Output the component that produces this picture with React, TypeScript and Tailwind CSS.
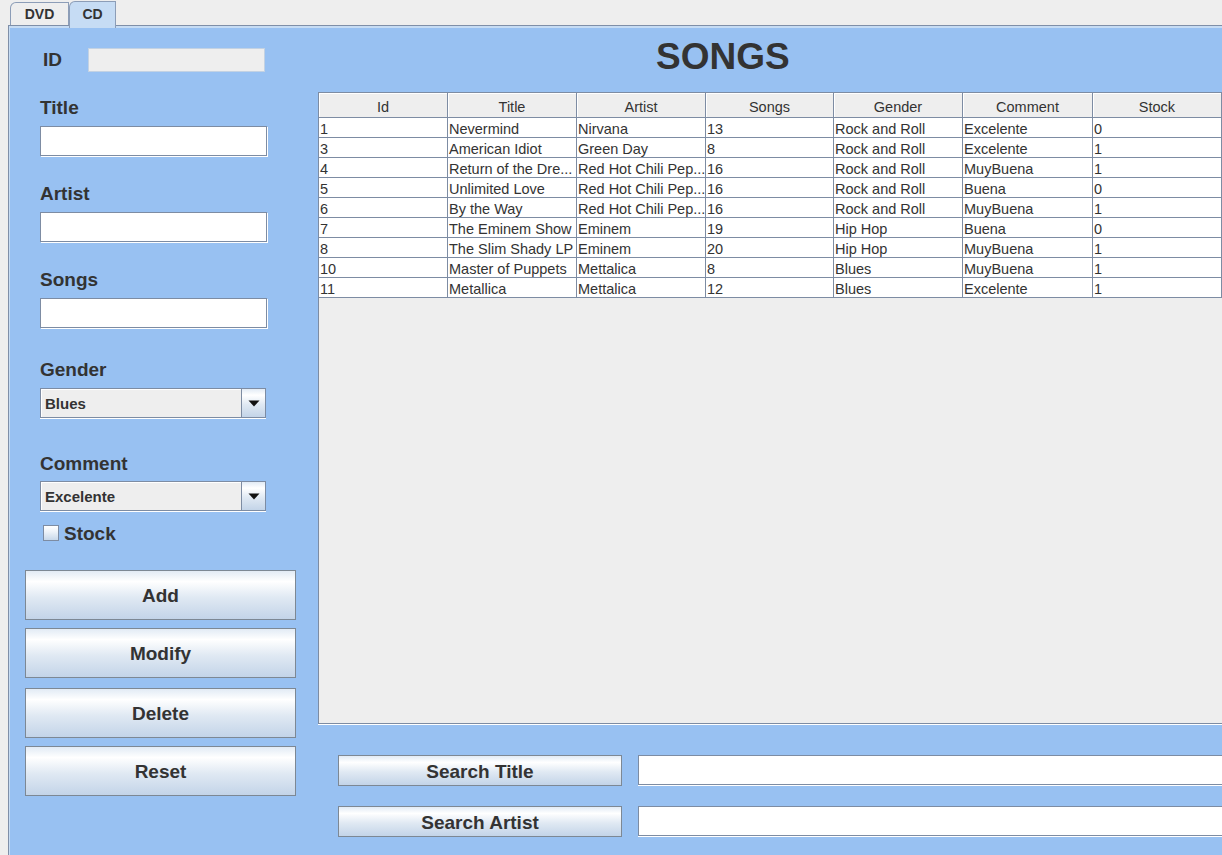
import React from "react";

const rows: string[][] = [
  ["1", "Nevermind", "Nirvana", "13", "Rock and Roll", "Excelente", "0"],
  ["3", "American Idiot", "Green Day", "8", "Rock and Roll", "Excelente", "1"],
  ["4", "Return of the Dre...", "Red Hot Chili Pep...", "16", "Rock and Roll", "MuyBuena", "1"],
  ["5", "Unlimited Love", "Red Hot Chili Pep...", "16", "Rock and Roll", "Buena", "0"],
  ["6", "By the Way", "Red Hot Chili Pep...", "16", "Rock and Roll", "MuyBuena", "1"],
  ["7", "The Eminem Show", "Eminem", "19", "Hip Hop", "Buena", "0"],
  ["8", "The Slim Shady LP", "Eminem", "20", "Hip Hop", "MuyBuena", "1"],
  ["10", "Master of Puppets", "Mettalica", "8", "Blues", "MuyBuena", "1"],
  ["11", "Metallica", "Mettalica", "12", "Blues", "Excelente", "1"],
];

const headers = ["Id", "Title", "Artist", "Songs", "Gender", "Comment", "Stock"];
const widths = ["w-[129px]", "w-[129px]", "w-[129px]", "w-[128px]", "w-[129px]", "w-[130px]", "w-[129px]"];

const btnBg =
  "bg-[linear-gradient(to_bottom,#e2ebf5_0%,#ffffff_22%,#e0e9f3_55%,#c3d4e8_100%)]";

function Label({ text, mt }: { text: string; mt: string }) {
  return (
    <div className={`${mt} ml-[31px] h-[20px] leading-[22px] text-[19px] font-bold`}>{text}</div>
  );
}

function Input() {
  return (
    <div className="mt-[9px] ml-[31px] w-[227px] h-[30px] bg-white border border-[#7d8ca3] shadow-[1px_1px_0_#ffffff]" />
  );
}

function Combo({ value, mt }: { value: string; mt: string }) {
  return (
    <div className={`${mt} ml-[31px] w-[226px] h-[30px] flex border border-[#7d8ca3] shadow-[0_1px_0_#ffffff]`}>
      <div className="flex-1 bg-[#eeeeee] border-t border-l border-white flex items-center pl-[3px] text-[15px] font-bold leading-[18px]">
        {value}
      </div>
      <div className={`w-[24px] border-l border-[#7d8ca3] ${btnBg} flex items-center justify-center`}>
        <svg width="12" height="7" viewBox="0 0 12 7">
          <polygon points="0.5,0.5 11.5,0.5 6,6.5" fill="#111111" />
        </svg>
      </div>
    </div>
  );
}

function BigButton({ text, mt }: { text: string; mt: string }) {
  return (
    <div
      className={`${mt} ml-[16px] w-[271px] h-[50px] border border-[#7d8894] ${btnBg} flex items-center justify-center text-[19px] font-bold leading-[20px] pt-[2px]`}
    >
      {text}
    </div>
  );
}

export default function App() {
  return (
    <div className="w-[1222px] h-[855px] bg-[#eeeeee] flex flex-col overflow-hidden font-['Liberation_Sans',Arial,sans-serif] text-[#333333]">
      {/* Tabs */}
      <div className="h-[25px] flex items-end pl-[10px] shrink-0">
        <div className="w-[59px] h-[23px] border-l border-t border-r border-[#8c9db7] rounded-tl-[6px] bg-[#eeeeee] flex items-center justify-center text-[14px] font-bold leading-[16px]">
          DVD
        </div>
        <div className="relative z-10 -mb-[3px] w-[47px] h-[27px] border-l border-t border-r border-[#8c9db7] rounded-tl-[6px] bg-[#c6dcf4] flex items-start justify-center pt-[4px] text-[14px] font-bold leading-[16px]">
          CD
        </div>
      </div>

      {/* Panel */}
      <div className="ml-[8px] flex-1 border-l border-t border-[#7f8fa8] bg-[#98c1f2] shadow-[inset_1px_2px_0_#c6dcf4] flex min-h-0">
        {/* Left column */}
        <div className="w-[309px] shrink-0 flex flex-col">
          <div className="mt-[22px] ml-[34px] h-[24px] flex items-center">
            <div className="w-[45px] text-[19px] font-bold leading-[20px]">ID</div>
            <div className="w-[177px] h-[24px] bg-[#eeeeee] border border-[#c3d2e3]" />
          </div>

          <Label text="Title" mt="mt-[25px]" />
          <Input />
          <Label text="Artist" mt="mt-[27px]" />
          <Input />
          <Label text="Songs" mt="mt-[27px]" />
          <Input />

          <Label text="Gender" mt="mt-[31px]" />
          <Combo value="Blues" mt="mt-[9px]" />
          <Label text="Comment" mt="mt-[35px]" />
          <Combo value="Excelente" mt="mt-[8px]" />

          <div className="mt-[12px] ml-[34px] h-[20px] flex items-center">
            <div className="w-[16px] h-[16px] border border-[#7d8ca3] bg-[linear-gradient(to_bottom,#ffffff_0%,#eef3f9_40%,#c8d8ea_100%)]" />
            <div className="ml-[5px] text-[19px] font-bold leading-[20px] pt-[2px]">Stock</div>
          </div>

          <BigButton text="Add" mt="mt-[27px]" />
          <BigButton text="Modify" mt="mt-[8px]" />
          <BigButton text="Delete" mt="mt-[10px]" />
          <BigButton text="Reset" mt="mt-[8px]" />
        </div>

        {/* Right column */}
        <div className="flex-1 min-w-0 overflow-hidden flex flex-col">
          <div className="h-[66px] shrink-0 pt-[11px] pl-[338px] text-[37px] font-bold leading-[40px] whitespace-nowrap">
            SONGS
          </div>

          {/* Table */}
          <div className="w-[930px] h-[632px] shrink-0 border-l border-t border-b border-[#7d8ca3] bg-[#eeeeee] shadow-[0_1px_0_#ffffff] flex flex-col">
            <div className="h-[25px] flex border-b border-[#7d8ca3] bg-[#eeeeee]">
              {headers.map((h, i) => (
                <div
                  key={h}
                  className={`${widths[i]} shrink-0 h-[24px] border-r border-[#7d8ca3] shadow-[inset_1px_1px_0_#ffffff] text-center text-[14.5px] leading-[20px] pt-[4px]`}
                >
                  {h}
                </div>
              ))}
            </div>
            {rows.map((r, ri) => (
              <div key={ri} className="h-[20px] flex">
                {r.map((c, ci) => (
                  <div
                    key={ci}
                    className={`${widths[ci]} shrink-0 h-[20px] bg-white border-r border-b border-[#7d8ca3] pl-[1px] pt-[3px] text-[14.5px] leading-[16px] whitespace-nowrap overflow-hidden`}
                  >
                    {c}
                  </div>
                ))}
              </div>
            ))}
          </div>

          {/* Search rows */}
          <div className="mt-[31px] ml-[20px] flex items-start">
            <div className={`w-[284px] h-[31px] border border-[#7d8894] ${btnBg} flex items-center justify-center text-[19px] font-bold leading-[20px] pt-[2px] shrink-0`}>
              Search Title
            </div>
            <div className="ml-[16px] w-[700px] h-[30px] shrink-0 bg-white border border-[#7d8ca3] shadow-[0_1px_0_#ffffff]" />
          </div>
          <div className="mt-[20px] ml-[20px] flex items-start">
            <div className={`w-[284px] h-[31px] border border-[#7d8894] ${btnBg} flex items-center justify-center text-[19px] font-bold leading-[20px] pt-[2px] shrink-0`}>
              Search Artist
            </div>
            <div className="ml-[16px] w-[700px] h-[30px] shrink-0 bg-white border border-[#7d8ca3] shadow-[0_1px_0_#ffffff]" />
          </div>
        </div>
      </div>
    </div>
  );
}
